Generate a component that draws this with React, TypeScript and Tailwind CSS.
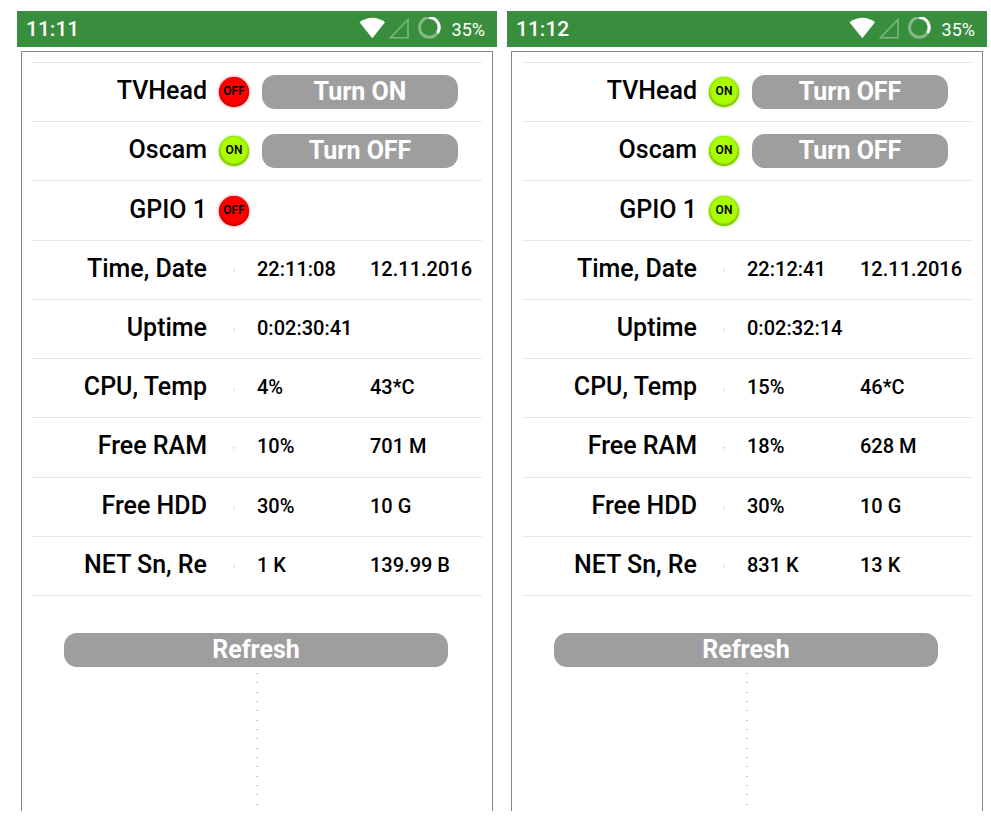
import React from "react";

type Toggle = { label: string; on: boolean; action?: string };
type Metric = { label: string; first: string; second?: string };
type Screen = { clock: string; toggles: Toggle[]; metrics: Metric[] };

const screens: Screen[] = [
  {
    clock: "11:11",
    toggles: [
      { label: "TVHead", on: false, action: "Turn ON" },
      { label: "Oscam", on: true, action: "Turn OFF" },
      { label: "GPIO 1", on: false },
    ],
    metrics: [
      { label: "Time, Date", first: "22:11:08", second: "12.11.2016" },
      { label: "Uptime", first: "0:02:30:41" },
      { label: "CPU, Temp", first: "4%", second: "43*C" },
      { label: "Free RAM", first: "10%", second: "701 M" },
      { label: "Free HDD", first: "30%", second: "10 G" },
      { label: "NET Sn, Re", first: "1 K", second: "139.99 B" },
    ],
  },
  {
    clock: "11:12",
    toggles: [
      { label: "TVHead", on: true, action: "Turn OFF" },
      { label: "Oscam", on: true, action: "Turn OFF" },
      { label: "GPIO 1", on: true },
    ],
    metrics: [
      { label: "Time, Date", first: "22:12:41", second: "12.11.2016" },
      { label: "Uptime", first: "0:02:32:14" },
      { label: "CPU, Temp", first: "15%", second: "46*C" },
      { label: "Free RAM", first: "18%", second: "628 M" },
      { label: "Free HDD", first: "30%", second: "10 G" },
      { label: "NET Sn, Re", first: "831 K", second: "13 K" },
    ],
  },
];

function StatusIcons() {
  return (
    <svg width="84" height="24" viewBox="0 0 84 24" fill="none" aria-hidden="true">
      <path d="M0.5 5.2C8.5 -0.8 18.5 -0.8 26 5.2L13.3 21.2Z" fill="#fff" />
      <path d="M31.5 20.7H49V2.5Z" stroke="#fff" strokeOpacity="0.35" strokeWidth="1.6" />
      <circle cx="70.3" cy="10.4" r="9.8" stroke="#fff" strokeOpacity="0.38" strokeWidth="3" />
      <path d="M70.3 0.6A9.8 9.8 0 0 1 78.4 15.9" stroke="#fff" strokeWidth="3" />
    </svg>
  );
}

function Lamp({ on }: { on: boolean }) {
  return (
    <span
      className={
        on
          ? "mx-auto flex size-[30px] items-center justify-center rounded-full bg-[#aaff00] pb-0.5 text-xs font-semibold shadow-[0_0_3px_#80e020,inset_0_-1px_2px_1px_#7fba00]"
          : "mx-auto flex size-[30px] items-center justify-center rounded-full bg-[#ff0000] pb-0.5 text-xs font-semibold shadow-[0_0_3px_#ff5050,inset_0_-1px_2px_1px_#c80000]"
      }
    >
      {on ? "ON" : "OFF"}
    </span>
  );
}

const labelClass = "pr-1 pb-0.5 text-right text-[25px] leading-8 font-medium whitespace-nowrap";
const valueClass = "pb-0.5 text-xl font-medium whitespace-nowrap";
const buttonClass =
  "flex h-[34px] items-center justify-center rounded-[13px] bg-[#9e9e9e] text-[25px] leading-8 font-bold text-white";

function Phone({ screen }: { screen: Screen }) {
  return (
    <section className="flex min-w-0 flex-col">
      <header className="flex h-9 items-center bg-[#388e3c] pr-3 pl-[9px] text-white">
        <span className="flex-1 pt-0.5 text-[21px] font-medium">{screen.clock}</span>
        <StatusIcons />
        <span className="ml-[9px] pt-0.5 text-lg">35%</span>
      </header>
      <div className="mx-1 mt-1 flex flex-col border-x border-t border-[#888] px-2.5 pt-2.5 pb-1.5">
        <table className="h-[534px] w-full table-fixed border-collapse text-black">
          <colgroup>
            <col />
            <col className="w-[46px]" />
            <col className="w-[113px]" />
            <col className="w-[112px]" />
          </colgroup>
          <tbody>
            {screen.toggles.map((t) => (
              <tr key={t.label} className="border-y border-[#e8e8e8]">
                <th scope="row" className={labelClass}>{t.label}</th>
                <td><Lamp on={t.on} /></td>
                <td colSpan={2} className="pr-6 pl-[5px]">
                  {t.action && <button type="button" className={`${buttonClass} w-full`}>{t.action}</button>}
                </td>
              </tr>
            ))}
            {screen.metrics.map((m) => (
              <tr key={m.label} className="border-y border-[#e8e8e8]">
                <th scope="row" className={labelClass}>{m.label}</th>
                <td className="text-center text-[6px] text-black">:</td>
                <td className={valueClass}>{m.first}</td>
                <td className={valueClass}>{m.second}</td>
              </tr>
            ))}
          </tbody>
        </table>
        <button type="button" className={`${buttonClass} mt-[37px] mr-[34px] ml-8`}>Refresh</button>
        <div className="mx-auto mt-1.5 flex h-[132px] flex-col justify-between" aria-hidden="true">
          {Array.from({ length: 15 }, (_, i) => (
            <span key={i} className="h-px w-0.5 bg-[#c4c4c4]" />
          ))}
        </div>
      </div>
    </section>
  );
}

export default function App() {
  return (
    <main className="grid grid-cols-2 gap-2.5 bg-white pt-[11px] pr-1 pb-[7px] pl-[17px] font-['Roboto',sans-serif]">
      {screens.map((s) => (
        <Phone key={s.clock} screen={s} />
      ))}
    </main>
  );
}
